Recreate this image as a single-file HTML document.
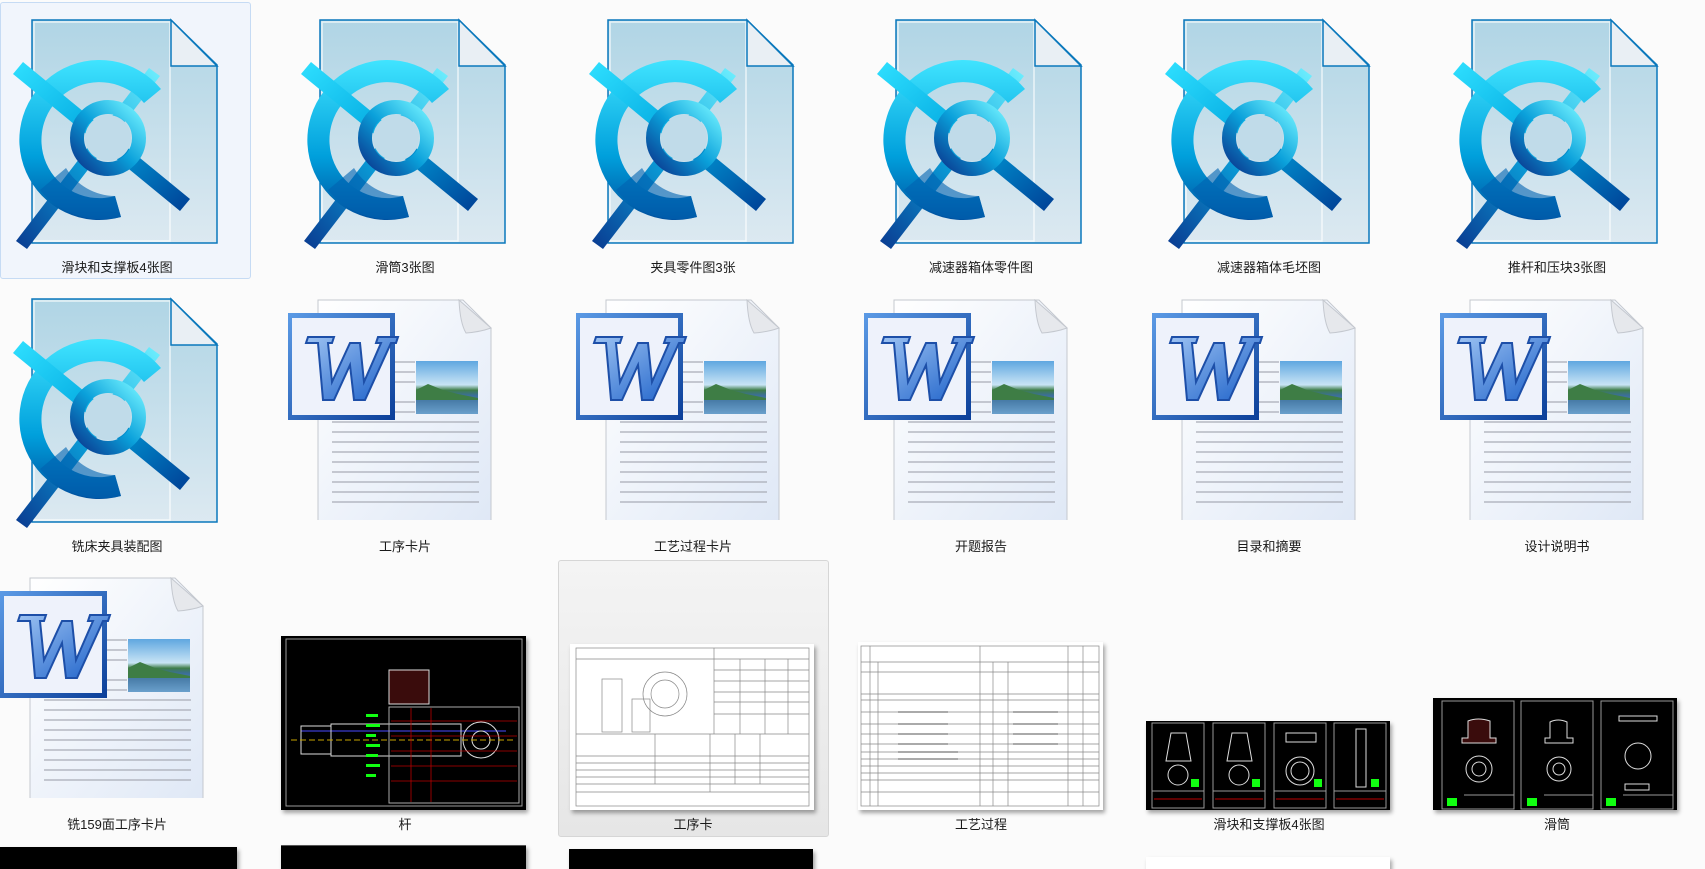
<!DOCTYPE html>
<html><head><meta charset="utf-8">
<style>
html,body{margin:0;padding:0;width:1705px;height:869px;overflow:hidden;background:#fbfbfb;position:relative;font-family:"Liberation Sans","Noto Sans CJK SC",sans-serif}
.a{position:absolute}
.lbl{position:absolute;width:288px;text-align:center;font-size:13px;color:#1a1a1a;line-height:16px}
svg{position:absolute;overflow:visible}
.thumb{position:absolute;box-shadow:2px 3px 4px rgba(0,0,0,.35)}
</style></head><body>
<svg width="0" height="0" style="position:absolute">
<defs>
<linearGradient id="pg" x1="0" y1="0" x2="0" y2="1"><stop offset="0" stop-color="#b0d5e5"/><stop offset="1" stop-color="#dce9f1"/></linearGradient>
<linearGradient id="bl" x1="0" y1="0" x2="1" y2="1"><stop offset="0" stop-color="#2fe0ff"/><stop offset=".5" stop-color="#00a6df"/><stop offset="1" stop-color="#003f95"/></linearGradient>
<linearGradient id="bl2" x1="1" y1="0" x2="0" y2="1"><stop offset="0" stop-color="#6ff0ff"/><stop offset=".5" stop-color="#0aa0da"/><stop offset="1" stop-color="#0a3a90"/></linearGradient>
<linearGradient id="bl3" x1="0" y1="0" x2="0" y2="1"><stop offset="0" stop-color="#40e4ff"/><stop offset=".6" stop-color="#00a0dc"/><stop offset="1" stop-color="#00509f"/></linearGradient>
<linearGradient id="wp" x1="0" y1="0" x2="1" y2="1"><stop offset="0" stop-color="#ffffff"/><stop offset="1" stop-color="#dfe8f6"/></linearGradient>
<linearGradient id="wb" x1="0" y1="0" x2="1" y2="1"><stop offset="0" stop-color="#5c9be6"/><stop offset="1" stop-color="#0b3f99"/></linearGradient>
<linearGradient id="wl" x1="0" y1="0" x2="1" y2="1"><stop offset="0" stop-color="#9cc2f2"/><stop offset="1" stop-color="#1a5fc8"/></linearGradient>
<linearGradient id="sky" x1="0" y1="0" x2="0" y2="1"><stop offset="0" stop-color="#5fa7e0"/><stop offset=".45" stop-color="#c8e4f5"/><stop offset=".55" stop-color="#3f7e4a"/><stop offset=".65" stop-color="#3b6e9a"/><stop offset="1" stop-color="#6aa0cc"/></linearGradient>
<symbol id="cad" viewBox="0 0 230 260">
<path d="M32 20H171L217 65V243H32Z" fill="url(#pg)" stroke="#0a78bc" stroke-width="1.5"/>
<path d="M34 22H170V241H34Z" fill="none" stroke="#fff" stroke-width="1.5" opacity=".7"/>
<path d="M171 20V66H217Z" fill="#e9eff4" stroke="#0a78bc" stroke-width="1.5"/>
<path d="M160 76L27 249L16 241L149 68Z" fill="url(#bl2)"/>
<path d="M161 89A80 80 0 1 0 121 217L115 196A58 58 0 1 1 144 103Z" fill="url(#bl3)"/>
<path d="M66 168A58 58 0 0 0 115 196L121 217A80 80 0 0 1 40 190Z" fill="#0062b0" opacity=".6"/>
<path d="M23 62L190 199L180 211L13 74Z" fill="url(#bl)"/>
<circle cx="108" cy="138" r="31" fill="none" stroke="url(#bl2)" stroke-width="14"/>
<circle cx="108" cy="138" r="23" fill="#c0dbe9"/>
</symbol>
<symbol id="word" viewBox="0 0 210 230">
<path d="M30 10H175L203 38V232H30Z" fill="url(#wp)" stroke="#c4c8cf" stroke-width="1"/>
<path d="M171 10Q172 33 178 43Q192 42 203 38Z" fill="#e6e8ec" stroke="#c4c8cf"/>
<g stroke="#a9acb6" stroke-width="1.2">
<line x1="90" y1="72" x2="127" y2="72"/><line x1="90" y1="82" x2="127" y2="82"/><line x1="90" y1="92" x2="127" y2="92"/><line x1="90" y1="112" x2="127" y2="112"/><line x1="90" y1="122" x2="127" y2="122"/>
<line x1="44" y1="132" x2="191" y2="132"/><line x1="44" y1="142" x2="191" y2="142"/><line x1="44" y1="152" x2="191" y2="152"/><line x1="44" y1="162" x2="191" y2="162"/><line x1="44" y1="172" x2="191" y2="172"/><line x1="44" y1="182" x2="191" y2="182"/><line x1="44" y1="192" x2="191" y2="192"/><line x1="44" y1="202" x2="191" y2="202"/><line x1="44" y1="212" x2="191" y2="212"/>
</g>
<rect x="128" y="71" width="62" height="53" fill="url(#sky)"/>
<path d="M128 100L140 94L155 100L170 104L190 108V110H128Z" fill="#3e7d45"/>
<rect x="-1" y="23" width="108" height="107" fill="url(#wb)"/>
<rect x="4" y="28" width="98" height="97" fill="#eef2fb"/>
<path d="M20 47H46L44 53H40L44 92L62 53H72L76 92L93 53H88L90 47H110L108 53H103L77 110H66L62 75L46 110H35L30 53H18Z" fill="url(#wl)" stroke="#1d4fa8" stroke-width="2"/>
</symbol>
</defs></svg>

<div class="a" style="left:0;top:2px;width:251px;height:277px;background:#f1f5fc;border:1px solid #c6dbf4;border-radius:3px;box-sizing:border-box"></div>
<div class="a" style="left:558px;top:560px;width:271px;height:277px;background:linear-gradient(#f4f4f4,#e6e6e6);border:1px solid #d6d6d6;border-radius:3px;box-sizing:border-box"></div>

<svg style="left:0;top:0" width="230" height="260" viewBox="0 0 230 260"><use href="#cad"/></svg>
<svg style="left:288px;top:0" width="230" height="260" viewBox="0 0 230 260"><use href="#cad"/></svg>
<svg style="left:576px;top:0" width="230" height="260" viewBox="0 0 230 260"><use href="#cad"/></svg>
<svg style="left:864px;top:0" width="230" height="260" viewBox="0 0 230 260"><use href="#cad"/></svg>
<svg style="left:1152px;top:0" width="230" height="260" viewBox="0 0 230 260"><use href="#cad"/></svg>
<svg style="left:1440px;top:0" width="230" height="260" viewBox="0 0 230 260"><use href="#cad"/></svg>
<div class="lbl" style="left:-27px;top:260px">滑块和支撑板4张图</div>
<div class="lbl" style="left:261px;top:260px">滑筒3张图</div>
<div class="lbl" style="left:549px;top:260px">夹具零件图3张</div>
<div class="lbl" style="left:837px;top:260px">减速器箱体零件图</div>
<div class="lbl" style="left:1125px;top:260px">减速器箱体毛坯图</div>
<div class="lbl" style="left:1413px;top:260px">推杆和压块3张图</div>

<svg style="left:0;top:279px" width="230" height="260" viewBox="0 0 230 260"><use href="#cad"/></svg>
<svg style="left:288px;top:290px" width="210" height="230" viewBox="0 0 210 230"><use href="#word"/></svg>
<svg style="left:576px;top:290px" width="210" height="230" viewBox="0 0 210 230"><use href="#word"/></svg>
<svg style="left:864px;top:290px" width="210" height="230" viewBox="0 0 210 230"><use href="#word"/></svg>
<svg style="left:1152px;top:290px" width="210" height="230" viewBox="0 0 210 230"><use href="#word"/></svg>
<svg style="left:1440px;top:290px" width="210" height="230" viewBox="0 0 210 230"><use href="#word"/></svg>
<div class="lbl" style="left:-27px;top:539px">铣床夹具装配图</div>
<div class="lbl" style="left:261px;top:539px">工序卡片</div>
<div class="lbl" style="left:549px;top:539px">工艺过程卡片</div>
<div class="lbl" style="left:837px;top:539px">开题报告</div>
<div class="lbl" style="left:1125px;top:539px">目录和摘要</div>
<div class="lbl" style="left:1413px;top:539px">设计说明书</div>

<svg style="left:0;top:568px" width="210" height="230" viewBox="0 0 210 230"><use href="#word"/></svg>

<svg class="thumb" style="left:281px;top:636px;background:#000" width="245" height="174">
<rect x="5" y="3" width="236" height="167" fill="none" stroke="#9a9a9a"/>
<rect x="108" y="34" width="40" height="34" fill="#3a0c0c" stroke="#ddd"/>
<line x1="20" y1="95" x2="225" y2="95" stroke="#4a4aff"/>
<rect x="20" y="90" width="30" height="28" fill="none" stroke="#ddd"/>
<rect x="50" y="88" width="130" height="32" fill="none" stroke="#ddd"/>
<circle cx="200" cy="104" r="18" fill="none" stroke="#ddd"/><circle cx="200" cy="104" r="9" fill="none" stroke="#ddd"/>
<line x1="10" y1="104" x2="235" y2="104" stroke="#c9a400" stroke-dasharray="6 3"/>
<rect x="108" y="71" width="130" height="96" fill="none" stroke="#aaa"/>
<g stroke="#b00" stroke-width=".8"><line x1="110" y1="85" x2="236" y2="85"/><line x1="110" y1="100" x2="236" y2="100"/><line x1="110" y1="115" x2="236" y2="115"/><line x1="110" y1="130" x2="236" y2="130"/><line x1="110" y1="145" x2="236" y2="145"/><line x1="130" y1="72" x2="130" y2="166"/><line x1="150" y1="72" x2="150" y2="166"/></g>
<g fill="#1f1"><rect x="85" y="78" width="12" height="3"/><rect x="85" y="88" width="14" height="3"/><rect x="85" y="98" width="10" height="3"/><rect x="85" y="108" width="14" height="3"/><rect x="85" y="118" width="12" height="3"/><rect x="85" y="128" width="14" height="3"/><rect x="85" y="138" width="10" height="3"/></g>
</svg>

<svg class="thumb" style="left:570px;top:644px;background:#fff" width="244" height="166">
<g stroke="#888" stroke-width=".7" fill="none">
<rect x="6" y="4" width="233" height="158"/>
<line x1="6" y1="15" x2="239" y2="15"/><line x1="144" y1="4" x2="144" y2="90"/>
<line x1="144" y1="26" x2="239" y2="26"/><line x1="144" y1="37" x2="239" y2="37"/><line x1="144" y1="48" x2="239" y2="48"/><line x1="144" y1="58" x2="239" y2="58"/><line x1="144" y1="70" x2="239" y2="70"/>
<line x1="170" y1="15" x2="170" y2="90"/><line x1="195" y1="15" x2="195" y2="90"/><line x1="218" y1="15" x2="218" y2="90"/>
<line x1="6" y1="90" x2="239" y2="90"/><line x1="6" y1="112" x2="239" y2="112"/><line x1="6" y1="119" x2="239" y2="119"/><line x1="6" y1="126" x2="239" y2="126"/><line x1="6" y1="133" x2="239" y2="133"/><line x1="6" y1="140" x2="239" y2="140"/><line x1="6" y1="148" x2="239" y2="148"/>
<line x1="85" y1="90" x2="85" y2="140"/><line x1="140" y1="90" x2="140" y2="148"/><line x1="165" y1="90" x2="165" y2="140"/><line x1="190" y1="90" x2="190" y2="140"/>
<rect x="32" y="35" width="20" height="53"/><circle cx="95" cy="50" r="22"/><circle cx="95" cy="50" r="14"/><rect x="62" y="55" width="18" height="33"/>
</g></svg>

<svg class="thumb" style="left:858px;top:642px;background:#fff" width="245" height="168">
<g stroke="#888" stroke-width=".7" fill="none">
<rect x="3" y="4" width="238" height="160"/>
<line x1="3" y1="20" x2="241" y2="20"/><line x1="3" y1="30" x2="241" y2="30"/><line x1="3" y1="52" x2="241" y2="52"/>
<line x1="3" y1="58" x2="241" y2="58"/><line x1="3" y1="70" x2="241" y2="70"/><line x1="3" y1="82" x2="241" y2="82"/><line x1="3" y1="92" x2="241" y2="92"/><line x1="3" y1="102" x2="241" y2="102"/><line x1="3" y1="110" x2="241" y2="110"/><line x1="3" y1="117" x2="241" y2="117"/><line x1="3" y1="124" x2="241" y2="124"/><line x1="3" y1="131" x2="241" y2="131"/><line x1="3" y1="138" x2="241" y2="138"/><line x1="3" y1="150" x2="241" y2="150"/>
<line x1="12" y1="4" x2="12" y2="164"/><line x1="20" y1="20" x2="20" y2="164"/><line x1="122" y1="4" x2="122" y2="164"/><line x1="135" y1="20" x2="135" y2="164"/><line x1="150" y1="20" x2="150" y2="164"/><line x1="210" y1="4" x2="210" y2="164"/><line x1="225" y1="4" x2="225" y2="164"/>
</g><g fill="#aaa"><rect x="40" y="69" width="50" height="2"/><rect x="40" y="81" width="50" height="2"/><rect x="40" y="91" width="50" height="2"/><rect x="40" y="101" width="50" height="2"/><rect x="40" y="109" width="60" height="2"/><rect x="40" y="116" width="60" height="2"/><rect x="155" y="69" width="45" height="2"/><rect x="155" y="81" width="45" height="2"/><rect x="155" y="91" width="45" height="2"/><rect x="155" y="101" width="45" height="2"/></g></svg>

<svg class="thumb" style="left:1146px;top:721px;background:#000" width="244" height="89">
<g stroke="#999" fill="none"><rect x="6" y="2" width="52" height="85"/><rect x="67" y="2" width="52" height="85"/><rect x="128" y="2" width="52" height="85"/><rect x="188" y="2" width="52" height="85"/>
<line x1="6" y1="70" x2="58" y2="70"/><line x1="67" y1="70" x2="119" y2="70"/><line x1="128" y1="70" x2="180" y2="70"/><line x1="188" y1="70" x2="240" y2="70"/></g>
<g stroke="#ddd" fill="none"><path d="M25 12H40L45 40H20Z"/><circle cx="32" cy="54" r="10"/><path d="M86 12H101L106 40H81Z"/><circle cx="93" cy="54" r="10"/><rect x="140" y="12" width="30" height="9"/><circle cx="154" cy="50" r="14"/><circle cx="154" cy="50" r="9"/><rect x="210" y="8" width="10" height="58"/></g>
<g fill="#1f1"><rect x="45" y="58" width="8" height="8"/><rect x="106" y="58" width="8" height="8"/><rect x="168" y="58" width="8" height="8"/><rect x="225" y="58" width="8" height="8"/></g>
<g stroke="#b00"><line x1="8" y1="78" x2="56" y2="78"/><line x1="69" y1="78" x2="117" y2="78"/><line x1="130" y1="78" x2="178" y2="78"/><line x1="190" y1="78" x2="238" y2="78"/></g>
</svg>

<svg class="thumb" style="left:1433px;top:698px;background:#000" width="244" height="112">
<g stroke="#999" fill="none"><rect x="9" y="3" width="72" height="108"/><rect x="88" y="3" width="72" height="108"/><rect x="168" y="3" width="72" height="108"/>
<line x1="31" y1="97" x2="81" y2="97"/><line x1="111" y1="97" x2="160" y2="97"/><line x1="190" y1="97" x2="240" y2="97"/></g>
<g stroke="#ddd" fill="none"><path d="M35 40V23Q45 19 57 23V40H63V45H29V40Z" fill="#3a0c0c"/><circle cx="46" cy="71" r="13"/><circle cx="46" cy="71" r="7"/><path d="M117 40V24Q125 20 134 24V40H140V45H112V40Z"/><circle cx="126" cy="71" r="12"/><circle cx="126" cy="71" r="6"/><rect x="186" y="18" width="38" height="5"/><circle cx="205" cy="58" r="13"/><rect x="192" y="86" width="24" height="6"/></g>
<g fill="#1f1"><rect x="14" y="100" width="10" height="8"/><rect x="94" y="100" width="10" height="8"/><rect x="173" y="100" width="10" height="8"/></g>
</svg>

<div class="lbl" style="left:-27px;top:817px">铣159面工序卡片</div>
<div class="lbl" style="left:261px;top:817px">杆</div>
<div class="lbl" style="left:549px;top:817px">工序卡</div>
<div class="lbl" style="left:837px;top:817px">工艺过程</div>
<div class="lbl" style="left:1125px;top:817px">滑块和支撑板4张图</div>
<div class="lbl" style="left:1413px;top:817px">滑筒</div>

<div class="thumb" style="left:0;top:847px;width:237px;height:30px;background:#000"></div>
<div class="thumb" style="left:281px;top:845px;width:245px;height:30px;background:#000;border-top:1px solid #555"></div>
<div class="thumb" style="left:569px;top:849px;width:244px;height:30px;background:#000"></div>
<div class="thumb" style="left:1146px;top:857px;width:244px;height:20px;background:#fff"></div>
</body></html>
